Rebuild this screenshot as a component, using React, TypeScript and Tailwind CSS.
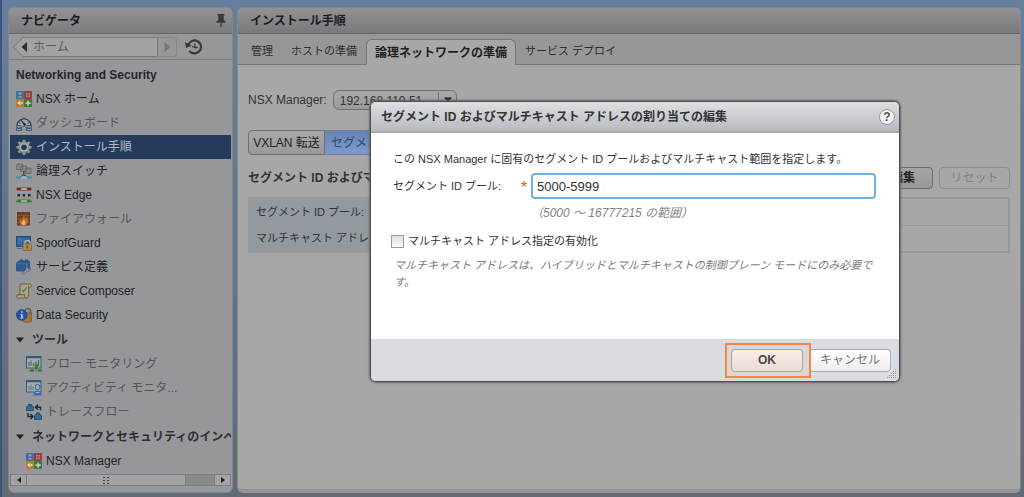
import type { ReactNode } from "react";

interface NavItem {
  label: string;
  icon: ReactNode;
  faint?: boolean;
}

/* Icons */

function Icon({ children }: { children: ReactNode }) {
  return (
    <svg viewBox="0 0 16 16" className="h-4 w-4 shrink-0" aria-hidden="true">
      {children}
    </svg>
  );
}

const nsxIcon = (
  <Icon>
    <rect x="0" y="0" width="8" height="8" rx="1" fill="#416f9b" />
    <rect x="8" y="0" width="8" height="8" rx="1" fill="#983e42" />
    <rect x="0" y="8" width="8" height="8" rx="1" fill="#bd7835" />
    <rect x="8" y="8" width="8" height="8" rx="1" fill="#2f7c3c" />
    <path d="M2.5 1.5h3v2h-3zM2.5 5h3v1.5h-3z" fill="#8fa9c0" />
    <path d="M10 2h1.5v1.5H10zM12.5 2H14v1.5h-1.5zM10 4.5h1.5V6H10zM12.5 4.5H14V6h-1.5z" fill="#bd8e90" />
    <path d="M1 12l3.5-2.5v5z" fill="#e0d2bc" />
    <path d="M5 11h1.5v2H5z" fill="#e0d2bc" />
    <path d="M11.3 9.5h1.6v1.8h1.8v1.6h-1.8v1.8h-1.6v-1.8H9.5v-1.6h1.8z" fill="#b9cbbb" />
  </Icon>
);

const dashboardIcon = (
  <Icon>
    <path d="M1.2 12.5A7 7 0 1 1 14.8 12.5" fill="#a4a6aa" stroke="#33404f" strokeWidth="1.3" />
    <path d="M3 8h1.5M11.5 8H13M8 2.5V4M4.3 4.3l1 1" stroke="#33404f" />
    <path d="M5 5L10 9.5 8.5 11z" fill="#222b36" stroke="#222b36" strokeWidth=".6" />
    <path d="M1 10.500h4v2.500H1zM11 10.500h4v2.500h-4zM.5 13.500h5v2h-5zM10.500 13.500h5v2h-5z" fill="#8e9eb2" stroke="#34557e" strokeWidth=".9" />
    <path d="M5.500 13L8 10.500l2.500 2.500" fill="none" stroke="#34557e" />
  </Icon>
);

const gearIcon = (
  <Icon>
    <path
      d="M6.8.8h2.4l.4 2 1.4.6 1.7-1.2 1.5 1.6-1.1 1.7.6 1.4 2 .4v1.9l-2 .5-.6 1.4 1.1 1.7-1.5 1.6-1.7-1.1-1.4.6-.4 2H6.8l-.4-2-1.4-.6-1.7 1.1-1.6-1.6 1.2-1.7-.6-1.4-2-.5V7.3l2-.4.6-1.4-1.2-1.7 1.6-1.6L5 3.4l1.4-.6z"
      fill="#92928f"
    />
    <circle cx="8" cy="8.2" r="3.9" fill="#b1b1ad" />
    <circle cx="8" cy="8.2" r="2.800" fill="#243b5c" />
  </Icon>
);

const switchIcon = (
  <Icon>
    <path d="M.5 2.5l1-1.5h5v5.5h-6zM4.5 4.5l1-1.5h5v5.5h-6zM9 6.5L10 5h5v5.5H9z" fill="#858789" stroke="#606264" strokeWidth=".8" />
    <path d="M7.7 8.5v3M7.7 11.5L5 14M7.7 11.5L11 14" stroke="#47494b" strokeWidth="1.3" />
    <path d="M0 13.5h5v2H0zM11 13.5h5v2h-5z" fill="#398bb2" />
    <path d="M5 13.5h6v2H5z" fill="#a9b7bf" />
  </Icon>
);

const edgeIcon = (
  <Icon>
    <rect x=".5" y=".5" width="15" height="3" rx="1" fill="#7d2c2d" />
    <rect x="5" y="1" width="6" height="2" fill="#a8a2a2" />
    <path d="M1.5 7H4v2.5H1.5zM6.7 7h2.5v2.5H6.7zM12 7h2.5v2.5H12z" fill="#26272a" />
    <rect x=".5" y="12.5" width="15" height="3" rx="1" fill="#368030" />
    <rect x="5" y="13" width="6" height="2" fill="#9fa99f" />
  </Icon>
);

const firewallIcon = (
  <Icon>
    <rect x="1" y="1" width="13" height="13.5" fill="#6d3b20" />
    <path d="M1 4.5h13M1 8h13M1 11.5h13M5 1v3.5M10 1v3.5M3.5 4.5V8M11.5 4.5V8" stroke="#8d5732" strokeWidth=".8" />
    <path d="M7.5 3.5c2 2 1 3.5 2.2 4.2.5-.4.6-1 .5-1.6 1.6 1.6 2.3 3.4 1.7 5.4-.6 2-2 3-4.3 3s-4-1.200-4.300-3.200c-.3-1.700.5-3 1.500-4.100 0 1 .2 1.600.8 2C6 7.200 7.800 5.800 7.500 3.500z" fill="#c26a24" />
    <path d="M7.600 8.500c1.500 1.500 2.300 2.700 1.900 4-.3 1-1 1.500-1.900 1.500s-1.900-.6-2-1.700c-.1-1.400 1.800-2 2-3.800z" fill="#d9b878" />
  </Icon>
);

const spoofIcon = (
  <Icon>
    <rect x=".5" y="1.500" width="14" height="10" fill="#2f649f" stroke="#274c78" />
    <path d="M3 4v4.500M5.500 4v3M8 4v4.500M3 4h2.500" stroke="#5f8ab5" strokeWidth=".9" fill="none" />
    <path d="M1 13.500h5" stroke="#4b6f98" />
    <path d="M9 9.500V8a2.500 2.500 0 0 1 5 0v1.500" fill="none" stroke="#b6b3a7" strokeWidth="1.400" />
    <rect x="7" y="9" width="8.500" height="6.500" rx=".6" fill="#aa8a45" stroke="#79602b" strokeWidth=".7" />
    <path d="M11.200 11v2.500" stroke="#4b3d1e" strokeWidth="1.200" />
  </Icon>
);

const serviceIcon = (
  <Icon>
    <path d="M.5 4.500L2 2.500h2V1h3v1.500h2V1h3v1.500h1.500v7L11 12H.5z" fill="#2a5d91" stroke="#214a75" strokeWidth=".7" />
    <path d="M.8 4.800H11V12" fill="none" stroke="#5381ac" strokeWidth=".8" />
    <path d="M6 14.500l4-4c-.7-1.700.5-3.300 2.300-3.200l-.9 1.600 1.300 1.300 1.900-.9c.3 1.900-1.300 3.200-3 2.600l-4 4z" fill="#999c9f" stroke="#515860" strokeWidth=".7" />
  </Icon>
);

const composerIcon = (
  <Icon>
    <path d="M4 1h9.500c2.500 0 2 3.500 0 3.500h-.8V12c0 2-1 3-2.500 3H2c-2 0-2-3.300 0-3.300h2z" fill="#aaa58b" stroke="#765a32" />
    <path d="M12.500 4.500V2.800M2 11.700h7c-.8 1 0 3.300 1.300 3.300" fill="none" stroke="#765a32" />
    <path d="M6 7l1.600 1.700L10.600 4" fill="none" stroke="#4a7b4d" strokeWidth="1.200" />
  </Icon>
);

const dataIcon = (
  <Icon>
    <path d="M9 6V3.800a2.800 2.800 0 0 1 5.500 0V7" fill="none" stroke="#5f6164" strokeWidth="1.600" />
    <rect x="7" y="6" width="8.500" height="9" rx=".7" fill="#9f793a" stroke="#6b5127" strokeWidth=".7" />
    <circle cx="5.700" cy="8" r="5.300" fill="#2352a4" stroke="#183c7d" strokeWidth=".7" />
    <path d="M5 4.300h1.700v1.500H5zM4.500 7h2.200v3.500h.7v1.200h-3v-1.200H5V8h-.5z" fill="#b5c1d4" />
  </Icon>
);

const flowIcon = (
  <Icon>
    <rect x=".5" y=".5" width="14.500" height="11.500" fill="#a6a9ac" stroke="#375a80" />
    <path d="M.5 1.500H15" stroke="#375a80" strokeWidth="1.600" />
    <path d="M3 10V6M5 10V4.500" stroke="#5b6c80" strokeWidth="1.200" />
    <path d="M7.500 10V7M12.500 10V4" stroke="#32803a" strokeWidth="1.400" />
    <path d="M10 10V5.500" stroke="#934346" strokeWidth="1.300" />
    <circle cx="10.500" cy="10" r="2" fill="#39843b" />
    <path d="M10 11v3" stroke="#454a4d" />
    <path d="M3.500 13.500H8v2H3.500zM11.500 13.500H16v2h-4.500z" fill="#2c7f31" />
    <path d="M8 14.500h3.500" stroke="#76977b" strokeWidth="1.500" />
  </Icon>
);

const activityIcon = (
  <Icon>
    <rect x=".5" y=".5" width="14.500" height="11.500" fill="#a6a9ac" stroke="#375a80" />
    <path d="M.5 1.500H15" stroke="#375a80" strokeWidth="1.600" />
    <path d="M3 10V6M5 10V4.500M7 10V7" stroke="#698087" strokeWidth="1.200" />
    <circle cx="11.500" cy="7" r="2.500" fill="#a4adb8" stroke="#2c5d9a" />
    <path d="M7.500 15.500c0-3.500 1.500-5 4-5s4 1.500 4 5z" fill="#3470ad" />
    <path d="M9.700 12.500h3.600" stroke="#a4b4c8" />
  </Icon>
);

const traceIcon = (
  <Icon>
    <path d="M.5 3L2 1.500h4L7.500 3v3.500h-7zM8.500 12l1.500-2h4l1.500 2v3.500h-7z" fill="#2d6d98" stroke="#1d4566" strokeWidth=".8" />
    <path d="M2.500 1.500V.5h3v1M10.500 10V9h3v1" fill="none" stroke="#1d4566" />
    <path d="M10 3.300h4.500v3M12 .8L9.500 3.300 12 5.800" fill="none" stroke="#202c39" strokeWidth="1.500" />
    <path d="M2 9v3.500h4.500M4.500 10L7 12.500 4.500 15" fill="none" stroke="#202c39" strokeWidth="1.500" />
  </Icon>
);

const mainItems: NavItem[] = [
  { label: "NSX ホーム", icon: nsxIcon },
  { label: "ダッシュボード", icon: dashboardIcon, faint: true },
  { label: "インストール手順", icon: gearIcon },
  { label: "論理スイッチ", icon: switchIcon },
  { label: "NSX Edge", icon: edgeIcon },
  { label: "ファイアウォール", icon: firewallIcon, faint: true },
  { label: "SpoofGuard", icon: spoofIcon },
  { label: "サービス定義", icon: serviceIcon },
  { label: "Service Composer", icon: composerIcon },
  { label: "Data Security", icon: dataIcon },
];

const toolItems: NavItem[] = [
  { label: "フロー モニタリング", icon: flowIcon, faint: true },
  { label: "アクティビティ モニタ...", icon: activityIcon, faint: true },
  { label: "トレースフロー", icon: traceIcon, faint: true },
];

const tabs = ["管理", "ホストの準備", "論理ネットワークの準備", "サービス デプロイ"];

function NavLink({ item, nested = false }: { item: NavItem; nested?: boolean }) {
  const active = item.label === "インストール手順";

  return (
    <a
      href="#"
      className={`flex h-6 items-center gap-1 whitespace-nowrap ${nested ? "pl-4" : "pl-1.5"} ${
        active
          ? "bg-[#243b5c] text-[#b4b9c2]"
          : item.faint
            ? "text-[#54565a]"
            : "text-[#222326]"
      }`}
    >
      {item.icon}
      <span className="leading-4">{item.label}</span>
    </a>
  );
}

function NavGroup({ label, children }: { label: string; children: ReactNode }) {
  return (
    <section>
      <h3 className="flex h-[25px] items-center gap-2 overflow-hidden pl-1.5 font-bold whitespace-nowrap text-[#2e2f32]">
        <svg viewBox="0 0 8 6" className="h-1.5 w-2 shrink-0">
          <path d="M0 .5h8L4 5.500z" fill="#222" />
        </svg>
        {label}
      </h3>
      {children}
    </section>
  );
}

function Navigator() {
  return (
    <aside className="flex w-[225px] shrink-0 flex-col overflow-hidden rounded-md border border-[#828589] bg-[#96979b]">
      <header className="flex h-[26px] items-center justify-between border-b border-[#66686b] bg-linear-to-b from-[#929395] to-[#7a7c7e] pr-1.5 pl-3">
        <h2 className="text-[12px] font-bold text-[#1c1c1e]">ナビゲータ</h2>
        <svg viewBox="0 0 10 13" className="h-[13px] w-2.5">
          <path d="M1.500 0h7v1.500H7.700v4.500L9.500 7.500v1.200h-9V7.500L2.300 6V1.500h-.8z" fill="#37383a" />
          <path d="M5 8.500V13" stroke="#37383a" strokeWidth="1.200" />
        </svg>
      </header>

      {/* History */}
      <div className="flex h-[26px] shrink-0 items-center border-b border-[#7c7d81] pl-1">
        <button type="button" className="relative flex h-5 w-[145px] items-center">
          <svg viewBox="0 0 145 20" preserveAspectRatio="none" className="absolute inset-0 h-full w-full">
            <path d="M10 .5H144.500v19H10L.5 10z" fill="#a2a2a3" stroke="#77797c" />
            <path d="M14 5v10L8.500 10z" fill="#2b2c2e" />
          </svg>
          <span className="relative pl-5 text-[#5b5c5f]">ホーム</span>
        </button>
        <button type="button" aria-label="進む" className="flex h-5 w-[19px] items-center justify-center rounded-r border border-l-0 border-[#85868a]">
          <svg viewBox="0 0 6 10" className="h-2.5 w-1.5">
            <path d="M.5 0v10L6 5z" fill="#737478" />
          </svg>
        </button>
        <button type="button" aria-label="履歴" className="ml-2">
          <svg viewBox="0 0 18 16" className="h-4 w-[18px]" fill="none" stroke="#38393b">
            <path d="M3.500 5.500A6.500 6.500 0 1 1 4.300 11.800" strokeWidth="2.200" />
            <path d="M0 3l1 6 5.800-2.300z" fill="#38393b" stroke="none" />
            <path d="M9.800 4.500v4h3M9.800 8.500L7 7.500" strokeWidth="1.300" />
          </svg>
        </button>
      </div>

      <nav className="flex-1 overflow-hidden px-px pt-[3px]">
        <h3 className="flex h-6 items-center pl-1.5 font-bold text-[#252629]">
          Networking and Security
        </h3>
        {mainItems.map((item) => (
          <NavLink key={item.label} item={item} />
        ))}
        <NavGroup label="ツール">
          {toolItems.map((item) => (
            <NavLink key={item.label} item={item} nested />
          ))}
        </NavGroup>
        <NavGroup label="ネットワークとセキュリティのインベントリ">
          <NavLink item={{ label: "NSX Manager", icon: nsxIcon }} nested />
        </NavGroup>
      </nav>

      {/* Horizontal scrollbar */}
      <div className="mx-px mb-1.5 flex h-3 shrink-0 border border-[#7d7e81] bg-[#88898b]">
        <button type="button" aria-label="左へスクロール" className="flex w-4 items-center justify-center border-r border-[#7d7e81] bg-[#a3a3a4]">
          <svg viewBox="0 0 4 6" className="h-1.5 w-1">
            <path d="M4 0v6L0 3z" fill="#222" />
          </svg>
        </button>
        <div className="flex flex-1 items-center justify-center border-r border-[#7d7e81] bg-[#a3a3a4]">
          <svg viewBox="0 0 7 7" className="h-[7px] w-[7px]">
            <path d="M0 0h2v1H0zM4 0h2v1H4zM0 3h2v1H0zM4 3h2v1H4zM0 6h2v1H0zM4 6h2v1H4z" fill="#444" />
          </svg>
        </div>
        <div className="w-7" />
        <button type="button" aria-label="右へスクロール" className="flex w-4 items-center justify-center border-l border-[#7d7e81] bg-[#a3a3a4]">
          <svg viewBox="0 0 4 6" className="h-1.5 w-1">
            <path d="M0 0v6l4-3z" fill="#222" />
          </svg>
        </button>
      </div>
    </aside>
  );
}

function Workspace() {
  return (
    <main className="min-w-0 flex-1 overflow-hidden rounded-md border border-b-4 border-[#858687] border-b-[#949494] bg-[#a7a7a7]">
      <header className="flex h-[26px] items-center border-b border-[#66686a] bg-linear-to-b from-[#909294] to-[#77797a] pl-3">
        <h1 className="text-[12px] font-bold text-[#1c1c1e]">インストール手順</h1>
      </header>

      <div role="tablist" className="flex h-[31px] items-end border-b border-[#777] bg-[#979797] pl-1">
        {tabs.map((tab, i) => (
          <button
            key={tab}
            type="button"
            role="tab"
            aria-selected={i === 2}
            className={
              i === 2
                ? "-mb-px h-[26px] rounded-t-md border border-b-0 border-[#777] bg-[#a7a7a7] px-2 text-[12px] font-bold whitespace-nowrap text-[#1f1f1f]"
                : "h-[25px] px-[9px] text-[11px] whitespace-nowrap text-[#2c2c2c]"
            }
          >
            {tab}
          </button>
        ))}
      </div>

      <div className="px-2.5 pt-[25px] text-[#333]">
        <div className="flex items-center gap-1.5">
          <label htmlFor="manager">NSX Manager:</label>
          <div className="relative">
            <select
              id="manager"
              className="h-5 w-[124px] appearance-none rounded-md border border-[#707173] bg-linear-to-b from-[#a9a9a9] to-[#999] pt-0.5 pl-1.5 text-[12px] leading-4"
            >
              <option>192.168.110.51</option>
            </select>
            <span className="pointer-events-none absolute inset-y-0.5 right-0 flex w-[19px] items-center justify-center border-l border-[#777]">
              <svg viewBox="0 0 8 6" className="h-1.5 w-2">
                <path d="M0 .5h8L4 5.500z" fill="#222" />
              </svg>
            </span>
          </div>
        </div>

        <div className="mt-5 flex">
          <button type="button" className="h-[25px] w-[77px] rounded-l border border-[#6e6f71] bg-linear-to-b from-[#a8a8a8] to-[#999] whitespace-nowrap text-[#222]">
            VXLAN 転送
          </button>
          <button type="button" className="h-[25px] border-y border-[#6e7f9c] bg-linear-to-b from-[#6484b4] to-[#7d9aca] px-1.5 text-[#35486a]">
            セグメント ID
          </button>
        </div>

        <div className="mt-2.5 flex h-[26px] items-center justify-between">
          <h2 className="font-bold whitespace-nowrap">セグメント ID およびマルチキャスト</h2>
          <div className="flex gap-1.5">
            <button type="button" className="h-[22px] w-[60px] rounded border border-[#6b6c6e] bg-linear-to-b from-[#a5a5a5] to-[#979797] font-bold text-[#222]">
              編集
            </button>
            <button type="button" disabled className="h-[22px] w-[71px] rounded border border-[#8b8c8d] text-[#808284]">
              リセット
            </button>
          </div>
        </div>

        <table className="mt-1.5 w-full border-collapse border-2 border-[#969899] text-left text-[11px]">
          <tbody>
            {["セグメント ID プール:", "マルチキャスト アドレス:"].map((name) => (
              <tr key={name} className="h-[27px] border border-[#96989a]">
                <th className="w-[200px] bg-[#929a9f] pl-1.5 font-normal whitespace-nowrap">{name}</th>
                <td />
              </tr>
            ))}
          </tbody>
        </table>
      </div>
    </main>
  );
}

function EditDialog() {
  return (
    <form
      role="dialog"
      aria-labelledby="dialog-title"
      className="absolute top-[101px] left-[368px] w-[530px] overflow-hidden rounded-md border border-[#4c4e51] bg-white shadow-[0_0_2px_1px_#66686b]"
    >
      <header className="flex h-[31px] items-center justify-between border-b-2 border-[#a9abaf] bg-linear-to-b from-[#dedfe3] to-[#babbc0] pr-1 pl-2.5">
        <h2 id="dialog-title" className="text-[12px] font-bold whitespace-nowrap text-[#333]">
          セグメント ID およびマルチキャスト アドレスの割り当ての編集
        </h2>
        <button type="button" className="h-4 w-4 rounded-full border border-[#999ba0] bg-[#f3f3f4] text-[12px] leading-3 font-bold text-[#555]">
          ?
        </button>
      </header>

      <div className="h-[206px] px-5 pt-4 text-[11px] text-[#333]">
        <p className="pl-0.5 leading-5 whitespace-nowrap">
          この NSX Manager に固有のセグメント ID プールおよびマルチキャスト範囲を指定します。
        </p>

        <div className="mt-1 flex items-center pl-0.5">
          <label htmlFor="pool" className="w-32 whitespace-nowrap">セグメント ID プール:</label>
          <span className="w-2.5 pt-1 text-base leading-4 text-[#c8622c]">*</span>
          <input
            id="pool"
            defaultValue="5000-5999"
            className="h-[26px] w-[345px] rounded border-2 border-[#6db3e0] bg-white px-1 text-[13px] text-[#333] outline-none"
          />
        </div>
        <p className="mt-1 pl-[140px] text-[12px] leading-5 text-[#808389] italic">（5000 ～ 16777215 の範囲）</p>

        <div className="mt-2 flex items-center gap-1">
          <input
            id="multicast"
            type="checkbox"
            className="h-[13px] w-[13px] appearance-none border border-[#999b9e] bg-linear-to-b from-[#dfdfe0] to-[#fafafa]"
          />
          <label htmlFor="multicast" className="leading-5">マルチキャスト アドレス指定の有効化</label>
        </div>
        <p className="mt-1.5 pl-[3px] leading-[17px] text-[#777a80] italic">
          マルチキャスト アドレスは、ハイブリッドとマルチキャストの制御プレーン モードにのみ必要です。
        </p>
      </div>

      <footer className="relative flex h-[42px] items-center justify-end gap-1.5 bg-[#d9dce1] pr-2">
        <div className="relative">
          <button type="submit" className="h-[23px] w-[72px] rounded border border-[#a8a3a3] bg-linear-to-b from-[#fdf3ee] to-[#ebe1dd] text-[12px] font-bold text-[#444]">
            OK
          </button>
          <span className="pointer-events-none absolute -inset-y-1.5 -right-2 -left-1.5 border-2 border-[#f9853c] bg-[#e78a4a]/5" />
        </div>
        <button type="button" className="h-[23px] w-[82px] rounded border border-[#a9abad] bg-linear-to-b from-white to-[#ececec] text-[12px] text-[#77797c]">
          キャンセル
        </button>
        <svg viewBox="0 0 10 10" className="absolute right-0.5 bottom-0.5 h-2.5 w-2.5" fill="none" stroke="#96999e" strokeDasharray="1 1">
          <path d="M8 .5h2M6 2.500h4M4 4.500h6M2 6.500h8M0 8.500h10" />
        </svg>
      </footer>
    </form>
  );
}

export default function App() {
  return (
    <div className="relative flex min-h-screen gap-1 border-l-2 border-[#3b5678] bg-linear-to-b from-[#64809e] via-[#647488] to-[#616a75] pt-[7px] pr-[3px] pb-1 pl-1.5 font-['Liberation_Sans','Noto_Sans_CJK_JP',sans-serif] text-[12px]">
      <Navigator />
      <Workspace />
      <EditDialog />
    </div>
  );
}
